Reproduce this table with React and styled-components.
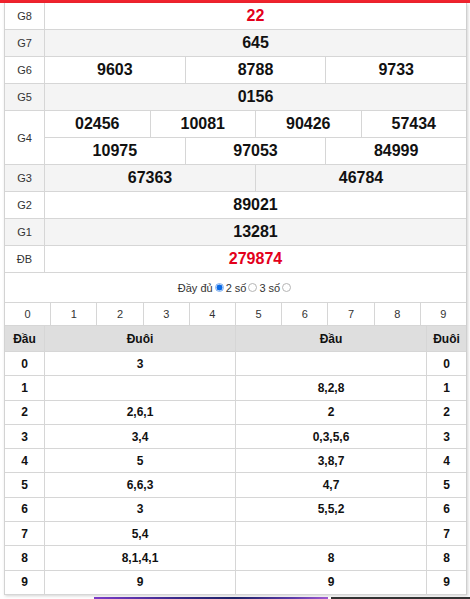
import React from 'react';
import styled, { createGlobalStyle } from 'styled-components';

const GlobalStyle = createGlobalStyle`
  body {
    margin: 0;
    background: #fff;
    font-family: "Liberation Sans", Arial, sans-serif;
    color: #222;
  }
`;

const TopBar = styled.div`
  height: 3px;
  background: #f0232e;
`;

const Box = styled.div`
  width: 463px;
  margin-left: 4px;
  box-sizing: border-box;
  border-left: 1px solid #d3d3d3;
  border-right: 1px solid #cfcfcf;
  box-shadow: 1px 1px 3px rgba(0, 0, 0, 0.18);
  background: #fff;
`;

const PrizeRow = styled.div`
  display: flex;
  background: ${props => (props.$alt ? '#f4f4f4' : '#fff')};
  border-bottom: 1px solid #d6d6d6;
`;

const PrizeName = styled.div`
  flex: none;
  width: 40px;
  box-sizing: border-box;
  border-right: 1px solid #d6d6d6;
  display: flex;
  align-items: center;
  justify-content: center;
  font-size: 11px;
  color: #333;
`;

const PrizeValues = styled.div`
  flex: 1;
  display: flex;
  flex-direction: column;
`;

const ValueLine = styled.div`
  display: flex;
  & + & {
    border-top: 1px solid #d6d6d6;
  }
`;

const Num = styled.div`
  flex: 1;
  height: 26px;
  box-sizing: border-box;
  display: flex;
  align-items: center;
  justify-content: center;
  font-size: 16px;
  font-weight: bold;
  color: ${props => (props.$red ? '#e3001b' : '#111')};
  & + & {
    border-left: 1px solid #d6d6d6;
  }
`;

const RadioBar = styled.div`
  height: 29px;
  display: flex;
  align-items: center;
  justify-content: center;
  font-size: 11px;
  color: #333;
`;

const Radio = styled.input`
  appearance: none;
  width: 9px;
  height: 9px;
  margin: 0 2px;
  border-radius: 50%;
  border: 1px solid #b5b5b5;
  background: #fff;
  &:checked {
    border-color: #7fb0f2;
    background: radial-gradient(circle, #0a6ae6 0 55%, #d9e8fc 65%);
  }
`;

const DigitRow = styled.div`
  display: flex;
  border-top: 1px solid #d6d6d6;
  border-bottom: 1px solid #d6d6d6;
`;

const DigitCell = styled.div`
  flex: 1;
  height: 22px;
  box-sizing: border-box;
  display: flex;
  align-items: center;
  justify-content: center;
  font-size: 11px;
  color: #333;
  & + & {
    border-left: 1px solid #d6d6d6;
  }
`;

const LotoRow = styled.div`
  display: grid;
  grid-template-columns: 40px 1fr 1fr 39px;
  height: ${props => (props.$head ? '26px' : '24.3px')};
  box-sizing: border-box;
  background: ${props => (props.$head ? '#dedede' : '#fff')};
  border-bottom: 1px solid #d6d6d6;
`;

const LotoCell = styled.div`
  display: flex;
  align-items: center;
  justify-content: center;
  font-size: 12px;
  font-weight: bold;
  color: #111;
  border-right: 1px solid #d6d6d6;
  &:last-child {
    border-right: none;
  }
`;

const Banner = styled.div`
  display: flex;
  gap: 3px;
  height: 40px;
  margin-top: 2px;
  padding-left: 94px;
`;

const BannerArt = styled.div`
  width: 234px;
  background: linear-gradient(90deg, #7b3cc8 0%, #3a2a8a 35%, #1d2266 60%, #5a3aa8 85%, #a05ad0 100%);
`;

const BannerDark = styled.div`
  flex: 1;
  background: #333;
`;

const prizes = [
  { name: 'G8', lines: [['22']], red: true },
  { name: 'G7', lines: [['645']] },
  { name: 'G6', lines: [['9603', '8788', '9733']] },
  { name: 'G5', lines: [['0156']] },
  { name: 'G4', lines: [['02456', '10081', '90426', '57434'], ['10975', '97053', '84999']] },
  { name: 'G3', lines: [['67363', '46784']] },
  { name: 'G2', lines: [['89021']] },
  { name: 'G1', lines: [['13281']] },
  { name: 'ĐB', lines: [['279874']], red: true },
];

const duoi = ['3', '', '2,6,1', '3,4', '5', '6,6,3', '3', '5,4', '8,1,4,1', '9'];
const dau = ['', '8,2,8', '2', '0,3,5,6', '3,8,7', '4,7', '5,5,2', '', '8', '9'];

const App = () => {
  return (
    <>
      <GlobalStyle />
      <TopBar />
      <Box>
        {prizes.map((p, i) => (
          <PrizeRow key={p.name} $alt={i % 2 === 1}>
            <PrizeName>{p.name}</PrizeName>
            <PrizeValues>
              {p.lines.map((line, j) => (
                <ValueLine key={j}>
                  {line.map((n) => (
                    <Num key={n} $red={p.red}>{n}</Num>
                  ))}
                </ValueLine>
              ))}
            </PrizeValues>
          </PrizeRow>
        ))}

        <RadioBar>
          Đầy đủ <Radio type="radio" name="mode" defaultChecked /> 2 số
          <Radio type="radio" name="mode" /> 3 số <Radio type="radio" name="mode" />
        </RadioBar>

        <DigitRow>
          {[0, 1, 2, 3, 4, 5, 6, 7, 8, 9].map((d) => (
            <DigitCell key={d}>{d}</DigitCell>
          ))}
        </DigitRow>

        <LotoRow $head>
          <LotoCell>Đầu</LotoCell>
          <LotoCell>Đuôi</LotoCell>
          <LotoCell>Đầu</LotoCell>
          <LotoCell>Đuôi</LotoCell>
        </LotoRow>
        {duoi.map((v, i) => (
          <LotoRow key={i}>
            <LotoCell>{i}</LotoCell>
            <LotoCell>{v}</LotoCell>
            <LotoCell>{dau[i]}</LotoCell>
            <LotoCell>{i}</LotoCell>
          </LotoRow>
        ))}
      </Box>
      <Banner>
        <BannerArt />
        <BannerDark />
      </Banner>
    </>
  );
};

export default App;
